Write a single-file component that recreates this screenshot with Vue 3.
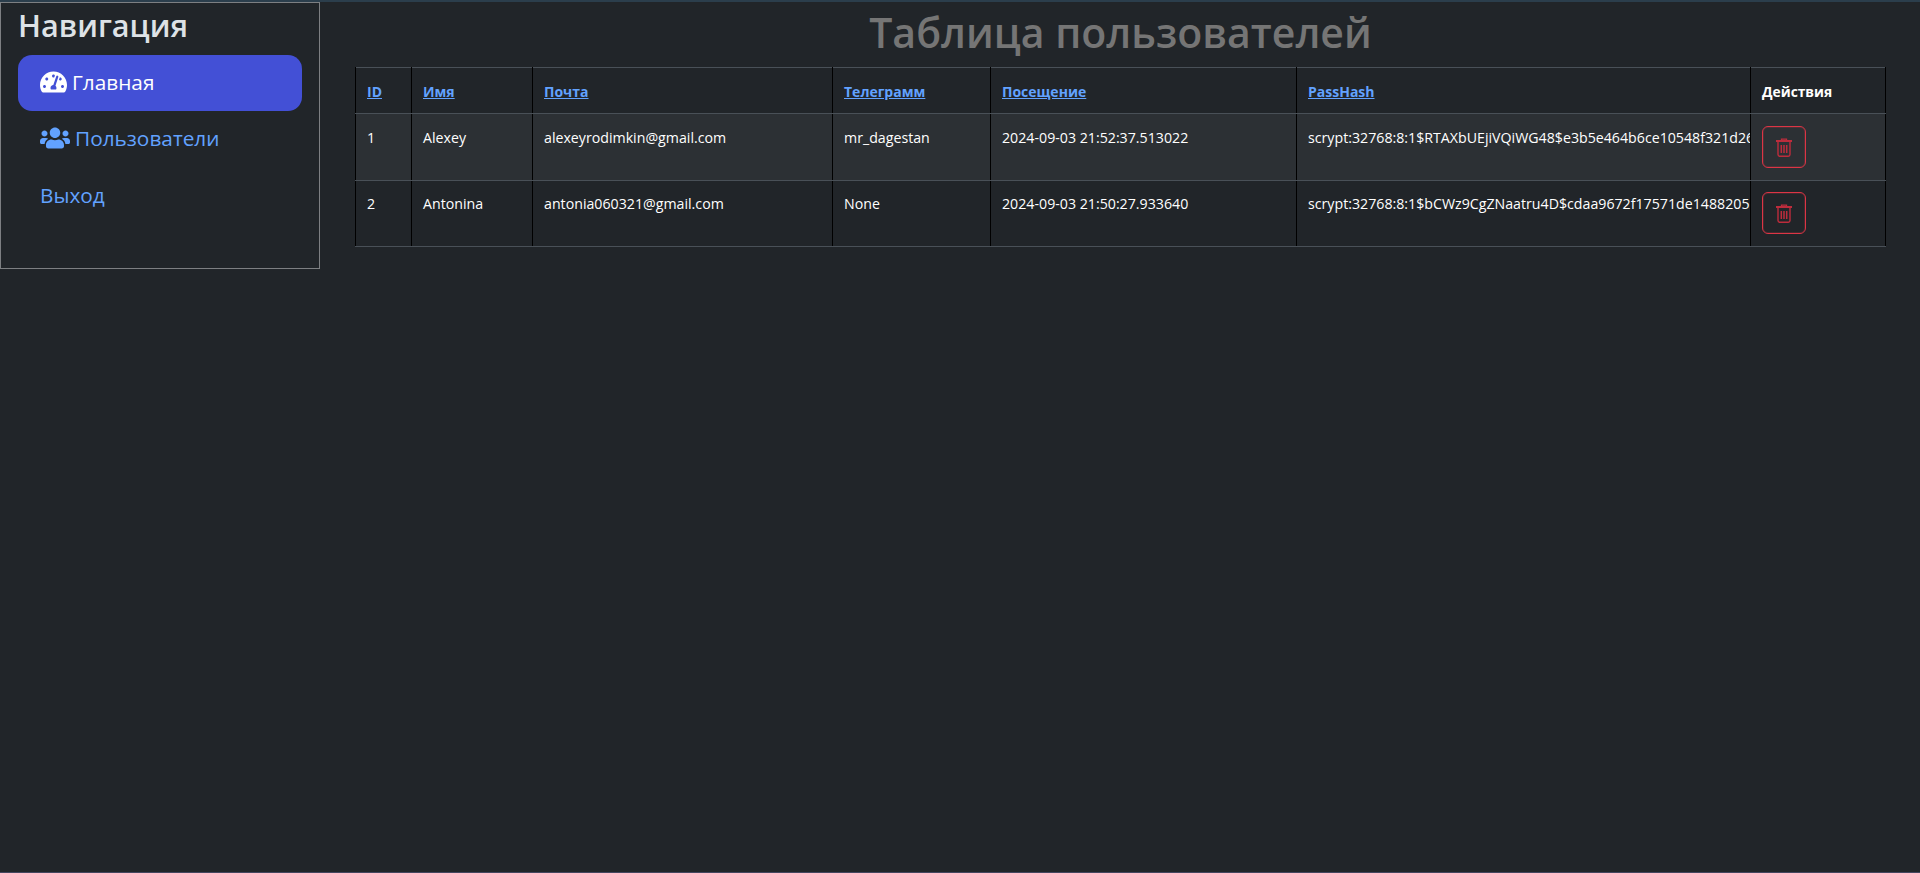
<script setup>
const columns = [
  { key: 'id', label: 'ID', width: 56 },
  { key: 'name', label: 'Имя', width: 121 },
  { key: 'email', label: 'Почта', width: 300 },
  { key: 'telegram', label: 'Телеграмм', width: 158 },
  { key: 'visit', label: 'Посещение', width: 306 },
  { key: 'hash', label: 'PassHash', width: 454 }
]

const users = [
  {
    id: 1,
    name: 'Alexey',
    email: 'alexeyrodimkin@gmail.com',
    telegram: 'mr_dagestan',
    visit: '2024-09-03 21:52:37.513022',
    hash: 'scrypt:32768:8:1$RTAXbUEjiVQiWG48$e3b5e464b6ce10548f321d26'
  },
  {
    id: 2,
    name: 'Antonina',
    email: 'antonia060321@gmail.com',
    telegram: 'None',
    visit: '2024-09-03 21:50:27.933640',
    hash: 'scrypt:32768:8:1$bCWz9CgZNaatru4D$cdaa9672f17571de1488205'
  }
]
</script>

<template>
  <div class="page">
    <aside class="sidebar">
      <h2 class="nav-title">Навигация</h2>
      <nav class="nav">
        <a href="#" class="nav-link active">
          <svg class="icon-gauge" viewBox="0 0 576 512" fill="currentColor">
            <path d="M288 32C128.94 32 0 160.94 0 320c0 52.8 14.25 102.26 39.06 144.8 5.61 9.62 16.3 15.2 27.44 15.2h443c11.14 0 21.83-5.58 27.44-15.2C561.75 422.26 576 372.8 576 320c0-159.06-128.94-288-288-288zm0 64c14.71 0 26.58 10.13 30.32 23.65-1.11 2.26-2.64 4.23-3.45 6.67l-9.22 27.67c-5.13 3.49-10.97 6.01-17.64 6.01-17.67 0-32-14.33-32-32S270.33 96 288 96zM96 384c-17.67 0-32-14.33-32-32s14.33-32 32-32 32 14.33 32 32-14.33 32-32 32zm48-160c-17.67 0-32-14.33-32-32s14.33-32 32-32 32 14.33 32 32-14.33 32-32 32zm246.77-72.41l-61.33 184C343.13 347.33 352 364.54 352 384c0 11.72-3.38 22.55-8.88 32H232.88c-5.5-9.45-8.88-20.28-8.88-32 0-33.94 26.5-61.43 59.9-63.59l61.34-184.01c4.17-12.56 17.73-19.45 30.36-15.17 12.57 4.19 19.35 17.79 15.17 30.36zm14.66 57.2l15.52-46.55c3.47-1.29 7.13-2.23 11.05-2.23 17.67 0 32 14.33 32 32s-14.33 32-32 32c-11.38-.01-20.89-6.28-26.57-15.22zM480 384c-17.67 0-32-14.33-32-32s14.33-32 32-32 32 14.33 32 32-14.33 32-32 32z" />
          </svg>
          Главная
        </a>
        <a href="#" class="nav-link">
          <svg class="icon-users" viewBox="0 0 640 512" fill="currentColor">
            <path d="M96 224c35.3 0 64-28.7 64-64s-28.7-64-64-64-64 28.7-64 64 28.7 64 64 64zm448 0c35.3 0 64-28.7 64-64s-28.7-64-64-64-64 28.7-64 64 28.7 64 64 64zm32 32h-64c-17.6 0-33.5 7.1-45.1 18.6 40.3 22.1 68.9 62 75.1 109.4h66c17.7 0 32-14.3 32-32v-32c0-35.3-28.7-64-64-64zm-256 0c61.9 0 112-50.1 112-112S381.9 32 320 32 208 82.1 208 144s50.1 112 112 112zm76.8 32h-8.3c-20.8 10-43.9 16-68.5 16s-47.6-6-68.5-16h-8.3C179.6 288 128 339.6 128 403.2V432c0 26.5 21.5 48 48 48h288c26.5 0 48-21.5 48-48v-28.8c0-63.6-51.6-115.2-115.2-115.2zm-223.7-13.4C161.5 263.1 145.6 256 128 256H64c-35.3 0-64 28.7-64 64v32c0 17.7 14.3 32 32 32h65.9c6.3-47.4 34.9-87.3 75.2-109.4z" />
          </svg>
          Пользователи
        </a>
        <a href="#" class="nav-link">Выход</a>
      </nav>
    </aside>

    <main class="content">
      <h1 class="title">Таблица пользователей</h1>
      <table class="users">
        <colgroup>
          <col v-for="col in columns" :key="col.key" :style="{ width: col.width + 'px' }" />
          <col />
        </colgroup>
        <thead>
          <tr>
            <th v-for="col in columns" :key="col.key"><a href="#">{{ col.label }}</a></th>
            <th>Действия</th>
          </tr>
        </thead>
        <tbody>
          <tr v-for="user in users" :key="user.id">
            <td v-for="col in columns" :key="col.key">{{ user[col.key] }}</td>
            <td class="actions">
              <button class="delete" type="button">
                <svg viewBox="0 0 16 19" width="16" height="19" fill="none" stroke="currentColor">
                  <path d="M5.5 2.2V1.2h5v1" stroke-width="1.3" />
                  <path d="M0.5 3h15" stroke-width="2" stroke-linecap="round" />
                  <path d="M2 4v12.6a1.7 1.7 0 0 0 1.7 1.7h8.6a1.7 1.7 0 0 0 1.7-1.7V4" stroke-width="1.4" />
                  <path d="M5.3 7v8M8 7v8M10.7 7v8" stroke-width="1.5" />
                </svg>
              </button>
            </td>
          </tr>
        </tbody>
      </table>
    </main>
  </div>
</template>

<style>
html,
body {
  margin: 0;
  background: #212529;
}
</style>

<style scoped>
.page {
  display: flex;
  align-items: flex-start;
  box-sizing: border-box;
  height: 873px;
  overflow: hidden;
  background: #212529;
  border-top: 2px solid #2b3e4c;
  border-bottom: 1px solid #44465f;
  font-family: "Open Sans", "Noto Sans", sans-serif;
  color: #fff;
}

.sidebar {
  box-sizing: border-box;
  flex: none;
  width: 320px;
  height: 267px;
  padding: 0 17px;
  border: 1px solid #7d7f82;
}

.nav-title {
  margin: 3px 0 0;
  font-size: 30.6px;
  line-height: 38px;
  font-weight: 600;
  color: #dee2e6;
}

.nav {
  display: flex;
  flex-direction: column;
  margin-top: 11px;
}

.nav-link {
  display: flex;
  align-items: center;
  gap: 5px;
  box-sizing: border-box;
  height: 56px;
  padding: 0 22px 2px;
  border-radius: 14px;
  font-size: 20.8px;
  color: #62a2ff;
  text-decoration: none;
}

.nav-link:last-child {
  padding-bottom: 0;
}

.nav-link.active {
  background: #4350d6;
  color: #fff;
}

.icon-gauge {
  width: 27px;
  height: 24px;
}

.icon-users {
  width: 30px;
  height: 24px;
}

.content {
  flex: 1;
  min-width: 0;
  padding: 0 34px 0 35px;
}

.title {
  margin: 0 0 5px;
  font-size: 41px;
  line-height: 60px;
  height: 60px;
  font-weight: 600;
  text-align: center;
  color: #757575;
}

.users {
  width: 1531px;
  table-layout: fixed;
  border-collapse: collapse;
  font-size: 14.2px;
  color: #fff;
}

.users th,
.users td {
  box-sizing: border-box;
  overflow: hidden;
  white-space: nowrap;
  text-align: left;
  vertical-align: top;
  padding: 14px 0 0 11px;
  border-bottom: 1px solid #495057;
  border-left: 1px solid #000;
}

.users th:last-child,
.users td:last-child {
  border-right: 1px solid #000;
}

.users thead tr {
  height: 46px;
  border-top: 1px solid #495057;
}

.users th {
  font-weight: 700;
  font-size: 14px;
  vertical-align: middle;
  padding-top: 2px;
}

.users th:last-child {
  font-size: 13.8px;
}

.users th a {
  color: #62a2ff;
}

.users tbody tr {
  height: 67px;
}

.users tbody tr:nth-child(odd) td {
  background: #2c3034;
}

.users tbody tr:last-child {
  height: 66px;
}

.users tbody tr:last-child td {
  padding-top: 13px;
}

.users .actions,
.users tbody tr:last-child .actions {
  padding-left: 11px;
  padding-top: 12px;
}

.users tbody tr:last-child .actions {
  padding-top: 11px;
}

.delete {
  display: flex;
  align-items: center;
  justify-content: center;
  box-sizing: border-box;
  width: 44px;
  height: 42px;
  padding: 0;
  background: transparent;
  border: 1px solid #dc3545;
  box-shadow: inset 0 0 0 1px rgba(220, 53, 69, 0.2);
  border-radius: 6px;
  color: #bd2c3c;
}
</style>
